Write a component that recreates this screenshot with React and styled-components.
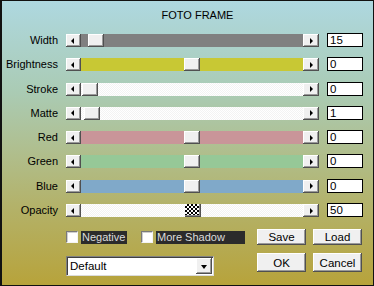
import React from 'react'
import styled, { createGlobalStyle } from 'styled-components'

const sliders = [
    { label: 'Width', value: '15', track: '#808080', pos: 0.034 },
    { label: 'Brightness', value: '0', track: '#c8c834', pos: 0.5 },
    { label: 'Stroke', value: '0', pattern: true, pos: 0.005 },
    { label: 'Matte', value: '1', pattern: true, pos: 0.015 },
    { label: 'Red', value: '0', track: '#c99599', pos: 0.5 },
    { label: 'Green', value: '0', track: '#96c897', pos: 0.5 },
    { label: 'Blue', value: '0', track: '#80a9c9', pos: 0.5 },
    { label: 'Opacity', value: '50', pattern: true, pos: 0.505, checker: true },
]

function Slider(props) {
    // thumb travel = track width (222) - thumb width (16)
    let left = Math.round(props.pos * 206)

    return (
        <Scroll>
            <ArrowButton><LeftArrow /></ArrowButton>
            <Track color={props.track} pattern={props.pattern}>
                <Thumb checker={props.checker} style={{ left: left + 'px' }} />
            </Track>
            <ArrowButton><RightArrow /></ArrowButton>
        </Scroll>
    )
}

function App() {
    return (
        <>
            <Global />
            <Frame>
                <Title>FOTO FRAME</Title>

                <Rows>
                    {sliders.map((s) => (
                        <React.Fragment key={s.label}>
                            <Label>{s.label}</Label>
                            <Slider {...s} />
                            <ValueBox defaultValue={s.value} readOnly />
                        </React.Fragment>
                    ))}
                </Rows>

                <Bottom>
                    <Checks>
                        <Check />
                        <CheckText width="46px">Negative</CheckText>
                        <Check spaced />
                        <CheckText width="89px">More Shadow</CheckText>
                    </Checks>
                    <Button>Save</Button>
                    <Button>Load</Button>

                    <Select>
                        <span>Default</span>
                        <DropButton><DownArrow /></DropButton>
                    </Select>
                    <Button tall>OK</Button>
                    <Button tall>Cancel</Button>
                </Bottom>
            </Frame>
        </>
    )
}


const Global = createGlobalStyle`
body {
    margin: 0;
    background: #fff;
}
`

const Frame = styled.div`
width: 374px;
height: 286px;
box-sizing: border-box;
border: 1px solid #111;
border-left-width: 2px;
background: linear-gradient(to bottom, #aed8e0 0%, #aacbb4 32%, #b0bd8a 55%, #b3b26a 72%, #b7a33b 100%);
font-family: "Liberation Sans", Arial, sans-serif;
font-size: 11px;
color: #000;
display: flex;
flex-direction: column;
`

const Title = styled.div`
margin-top: 8px;
padding-left: 20px;
height: 13px;
line-height: 13px;
text-align: center;
`

const Rows = styled.div`
margin-top: 11px;
display: grid;
grid-template-columns: 56px 253px 36px;
column-gap: 8px;
row-gap: 10.3px;
grid-auto-rows: 14px;
align-items: end;
`

const Label = styled.div`
text-align: right;
line-height: 14px;
align-self: center;
white-space: nowrap;
`

const Scroll = styled.div`
display: flex;
height: 13px;
`

const raised = `
background: #f0f0f0;
box-shadow: inset -1px -1px #505050, inset 1px 1px #fff, inset -2px -2px #9a9a9a;
`

const ArrowButton = styled.div`
${raised}
width: 16px;
flex: none;
display: flex;
align-items: center;
justify-content: center;
&:first-child {
    width: 15px;
}
`

const LeftArrow = styled.div`
width: 0;
height: 0;
border-top: 3px solid transparent;
border-bottom: 3px solid transparent;
border-right: 3px solid #000;
margin-right: 2px;
`

const RightArrow = styled(LeftArrow)`
border-right: none;
border-left: 3px solid #000;
margin-right: 0;
margin-left: 1px;
`

const Track = styled.div`
position: relative;
flex: 1;
background: ${(props) => props.pattern
        ? 'repeating-conic-gradient(#ffffff 0 25%, #f3f3f3 0 50%) 0 0 / 2px 2px'
        : props.color};
`

const Thumb = styled.div`
position: absolute;
top: 0;
width: 16px;
height: 13px;
${(props) => props.checker ? `
background: repeating-conic-gradient(#000 0 25%, #fff 0 50%) 0 0 / 4px 4px;
box-shadow: inset -1px -1px #505050, inset -2px -2px #8a8a8a;
` : raised}
`

const ValueBox = styled.input`
box-sizing: border-box;
width: 36px;
height: 14px;
padding: 0 0 0 2px;
margin: 0;
border: 1px solid #000;
background: #fff;
font-family: "Liberation Sans", Arial, sans-serif;
font-size: 11.5px;
color: #000;
outline: none;
`

const Bottom = styled.div`
margin-top: 12px;
display: grid;
grid-template-columns: 184px 49px 49px;
grid-template-rows: 16px 23px;
column-gap: 7px;
row-gap: 8px;
padding-left: 64px;
align-items: start;
`

const Checks = styled.div`
display: flex;
align-items: center;
height: 16px;
`

const Check = styled.div`
box-sizing: border-box;
width: 12px;
height: 12px;
flex: none;
margin-left: ${(props) => props.spaced ? '14px' : '0'};
background: #fff;
border-top: 1px solid #7a7a7a;
border-left: 1px solid #7a7a7a;
border-right: 1px solid #f4f4f4;
border-bottom: 1px solid #f4f4f4;
box-shadow: inset 1px 1px #cfcfcf;
`

const CheckText = styled.div`
margin-left: 3px;
padding: 0 1px;
box-sizing: border-box;
flex: none;
min-width: ${(props) => props.width};
height: 13px;
line-height: 13px;
background: #2b2b2b;
color: #dcdcdc;
font-size: 11px;
white-space: nowrap;
`

const Button = styled.div`
${raised}
height: ${(props) => props.tall ? '19px' : '16px'};
display: flex;
align-items: center;
justify-content: center;
font-size: 11.5px;
`

const Select = styled.div`
box-sizing: border-box;
margin-top: 3px;
width: 148px;
height: 20px;
background: #fff;
border-top: 1px solid #808080;
border-left: 1px solid #808080;
border-right: 1px solid #dcdcdc;
border-bottom: 1px solid #dcdcdc;
box-shadow: inset 1px 1px #404040;
display: flex;
align-items: center;
justify-content: space-between;
padding: 0 1px 0 3px;
font-size: 11.5px;
`

const DropButton = styled.div`
${raised}
width: 16px;
height: 16px;
display: flex;
align-items: center;
justify-content: center;
`

const DownArrow = styled.div`
width: 0;
height: 0;
border-left: 3.5px solid transparent;
border-right: 3.5px solid transparent;
border-top: 4px solid #000;
margin-top: 1px;
`

export default App
